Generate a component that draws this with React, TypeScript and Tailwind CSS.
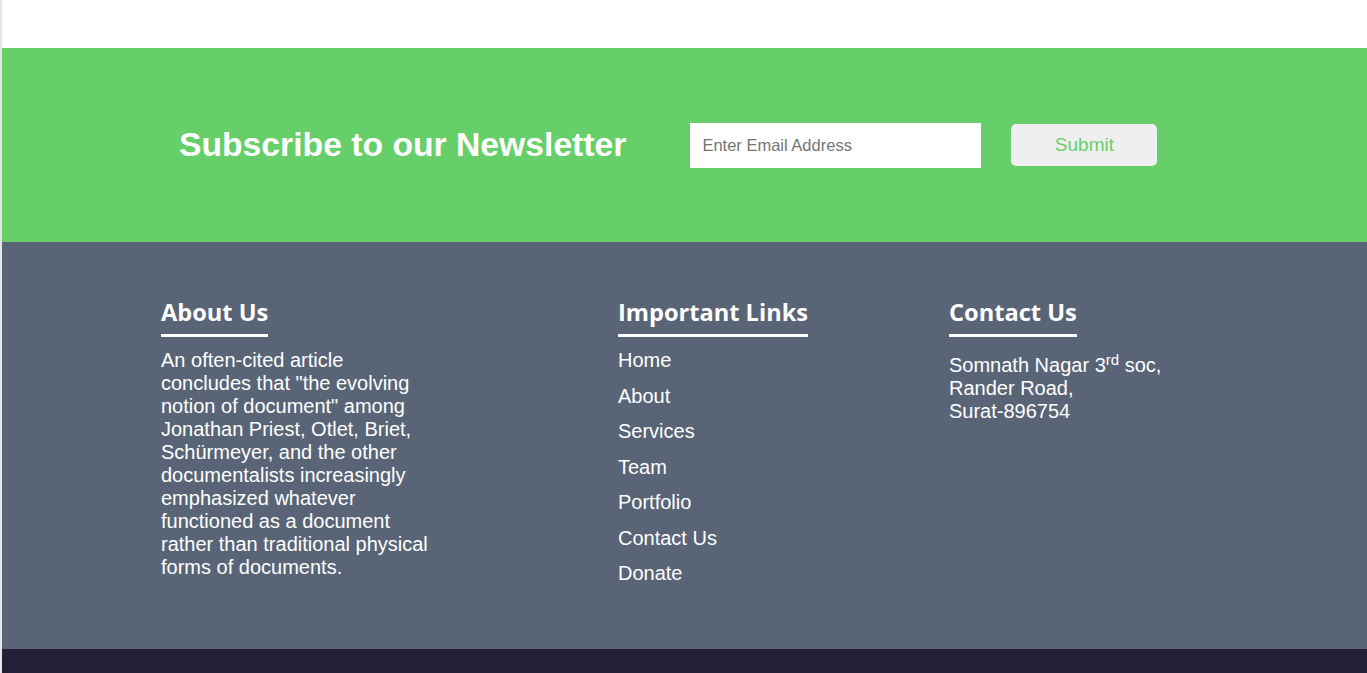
import React from 'react';

const links = ['Home', 'About', 'Services', 'Team', 'Portfolio', 'Contact Us', 'Donate'];

const Heading: React.FC<{ children: React.ReactNode }> = ({ children }) => (
  <div>
    <h3 className="inline-block border-b-[3px] border-white pb-[7px] text-[23.6px] leading-[29px] font-bold text-white font-['Open_Sans',sans-serif]">
      {children}
    </h3>
  </div>
);

export default function App() {
  return (
    <div className="min-h-screen border-l-2 border-[#e6e6e6] bg-white font-['Liberation_Sans',Arial,sans-serif]">
      <div className="h-12 bg-white" />

      {/* newsletter */}
      <section className="flex h-[194px] items-center bg-[#66cf69] pl-[177px]">
        <h2 className="text-[33.7px] leading-none font-bold text-white">Subscribe to our Newsletter</h2>
        <input
          type="email"
          placeholder="Enter Email Address"
          className="ml-[64px] h-[45px] w-[291px] bg-white pl-3 text-[16.5px] text-gray-700 outline-none placeholder:text-[#757575]"
        />
        <button className="ml-[30px] h-[42px] w-[146px] rounded-[5px] bg-[#efefef] text-[19px] text-[#66cf69]">
          Submit
        </button>
      </section>

      {/* footer */}
      <footer className="flex bg-[#596576] pt-[56px] pb-[64px] pl-[159px] text-[20px] leading-[23px] text-white">
        <div className="w-[457px]">
          <Heading>About Us</Heading>
          <p className="mt-3 w-[270px]">
            An often-cited article concludes that "the evolving notion of document" among Jonathan Priest, Otlet,
            Briet, Schürmeyer, and the other documentalists increasingly emphasized whatever functioned as a document
            rather than traditional physical forms of documents.
          </p>
        </div>

        <div className="w-[331px]">
          <Heading>Important Links</Heading>
          <ul className="mt-3 flex flex-col gap-[12.5px]">
            {links.map((l) => (
              <li key={l}>
                <a href="#">{l}</a>
              </li>
            ))}
          </ul>
        </div>

        <div>
          <Heading>Contact Us</Heading>
          <p className="mt-[17px]">
            Somnath Nagar 3<sup>rd</sup> soc,
            <br />
            Rander Road,
            <br />
            Surat-896754
          </p>
        </div>
      </footer>

      <div className="h-[40px] bg-[#231f37]" />
    </div>
  );
}
